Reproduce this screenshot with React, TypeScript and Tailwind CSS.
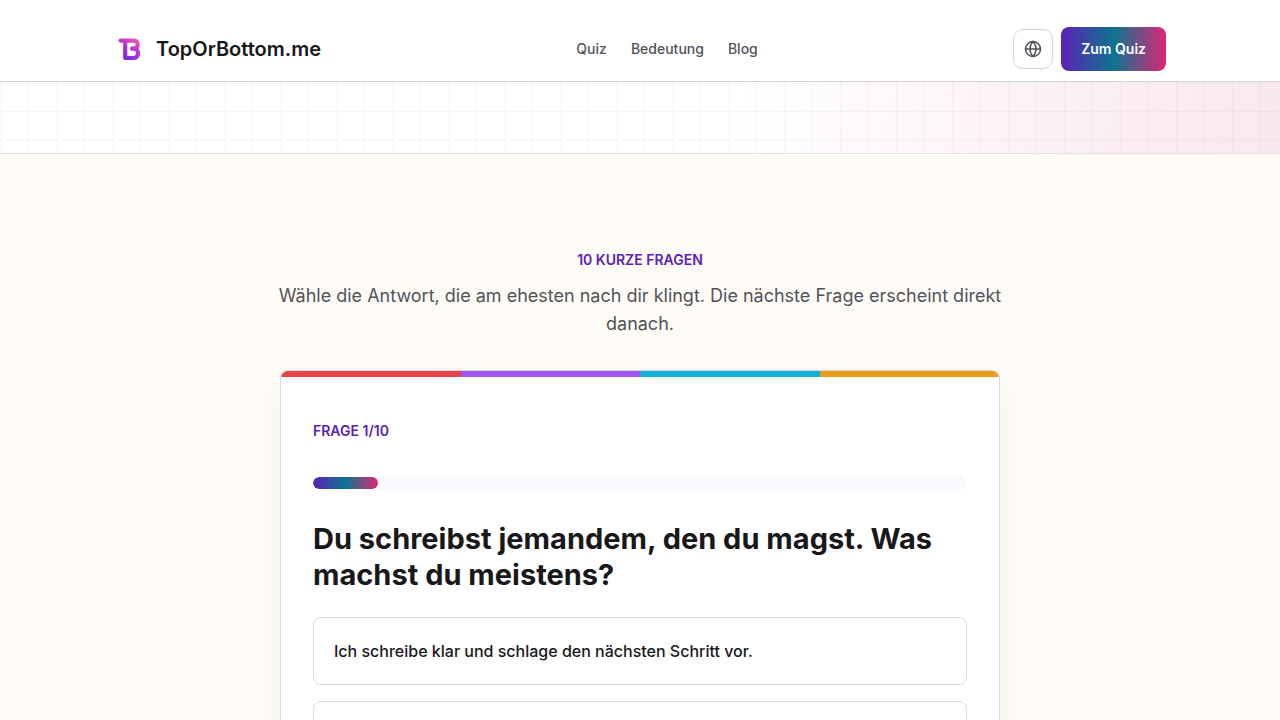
import { useState } from 'react'
import { Globe } from 'lucide-react'

const navLinks = [
  { label: 'Quiz', href: '#quiz' },
  { label: 'Bedeutung', href: '#bedeutung' },
  { label: 'Blog', href: '#blog' },
]

const stripes = ['bg-[#e54545]', 'bg-[#a355f0]', 'bg-[#12b0d8]', 'bg-[#eb9c1a]']

const question = {
  number: 1,
  total: 10,
  title: 'Du schreibst jemandem, den du magst. Was machst du meistens?',
  answers: [
    'Ich schreibe klar und schlage den nächsten Schritt vor.',
    'Ich warte ab und schaue, was die andere Person vorschlägt.',
  ],
}

function Logo() {
  return (
    <svg viewBox="0 0 32 32" className="size-8 shrink-0" fill="none" aria-hidden="true">
      <defs>
        <linearGradient id="logo" x1="25" y1="6" x2="12" y2="25" gradientUnits="userSpaceOnUse">
          <stop stopColor="#f5639a" />
          <stop offset="0.5" stopColor="#bd35d6" />
          <stop offset="1" stopColor="#7a2be8" />
        </linearGradient>
      </defs>
      <g stroke="url(#logo)" strokeWidth="4.2" strokeLinecap="round" strokeLinejoin="round">
        <path d="M6.6 7.6H20.4C24.8 7.6 24.8 15.6 20.4 15.6H18" />
        <path d="M20.4 15.6C25.4 15.6 25.2 25 20 25H11.2V8.5" />
      </g>
    </svg>
  )
}

function Header() {
  return (
    <header className="sticky top-0 z-10 border-b border-[#d4d4d8] bg-white">
      <div className="mx-auto flex max-w-[1100px] items-center justify-between px-6 pt-[27px] pb-2.5">
        <a href="#" className="flex items-center gap-2.5 text-xl font-semibold">
          <Logo />
          TopOrBottom.me
        </a>
        <nav className="flex gap-6 text-sm font-medium text-[#52525b]">
          {navLinks.map(link => (
            <a key={link.href} href={link.href} className="hover:text-[#18181b]">{link.label}</a>
          ))}
        </nav>
        <div className="flex items-center gap-2">
          <button aria-label="Sprache wählen" className="flex size-10 items-center justify-center rounded-[10px] border border-[#d4d4d8] bg-white text-[#52525b]">
            <Globe size={18} />
          </button>
          <a href="#quiz" className="flex h-11 items-center rounded-lg bg-[linear-gradient(90deg,#5b21b6,#0e7490_50%,#db2777)] px-5 text-sm font-semibold text-white">
            Zum Quiz
          </a>
        </div>
      </div>
    </header>
  )
}

export default function App() {
  const [selected, setSelected] = useState<number | null>(null)

  return (
    <div className="min-h-screen bg-[#fffcf7] font-['Inter',sans-serif] text-[#18181b]">
      <Header />

      {/* Rasterstreifen */}
      <div className="border-b border-[#e2e0ea] bg-[linear-gradient(105deg,#ffffff_57%,#fae6ef)]">
        <div className="h-[71px] bg-[linear-gradient(90deg,#18181b08_1px,transparent_1px),linear-gradient(#18181b08_1px,transparent_1px)] bg-[size:28px_28px] bg-[position:0_1px]" />
      </div>

      <main id="quiz" className="mx-auto max-w-[768px] px-6 py-24">
        <div className="-mx-2 mb-8 text-center">
          <p className="text-sm font-semibold text-[#5b21b6] uppercase">10 kurze Fragen</p>
          <p className="mt-3 text-lg text-[#52525b]">
            Wähle die Antwort, die am ehesten nach dir klingt. Die nächste Frage erscheint direkt danach.
          </p>
        </div>

        <section className="overflow-hidden rounded-lg border border-[#d8d6e0] bg-white shadow-[0_16px_40px_rgba(24,24,27,0.05)]">
          <div className="flex h-1.5">
            {stripes.map(color => (
              <div key={color} className={`flex-1 ${color}`} />
            ))}
          </div>
          <div className="px-8 pt-11 pb-8">
            <p className="text-sm font-semibold text-[#5b21b6]">FRAGE {question.number}/{question.total}</p>
            <div className="mt-9 h-3 overflow-hidden rounded-full bg-[#f8f8fd]">
              <div
                className="h-full rounded-full bg-[linear-gradient(90deg,#5b21b6,#0e7490_50%,#db2777)]"
                style={{ width: `${(question.number / question.total) * 100}%` }}
              />
            </div>
            <h2 className="mt-8 text-[29px] leading-9 font-bold">{question.title}</h2>
            <div className="mt-6 flex flex-col gap-4">
              {question.answers.map((answer, i) => (
                <button
                  key={answer}
                  onClick={() => setSelected(i)}
                  className={`min-h-[68px] rounded-lg border px-5 py-4 text-left font-medium ${selected === i ? 'border-[#5b21b6]' : 'border-[#dddde0]'}`}
                >
                  {answer}
                </button>
              ))}
            </div>
          </div>
        </section>
      </main>
    </div>
  )
}
